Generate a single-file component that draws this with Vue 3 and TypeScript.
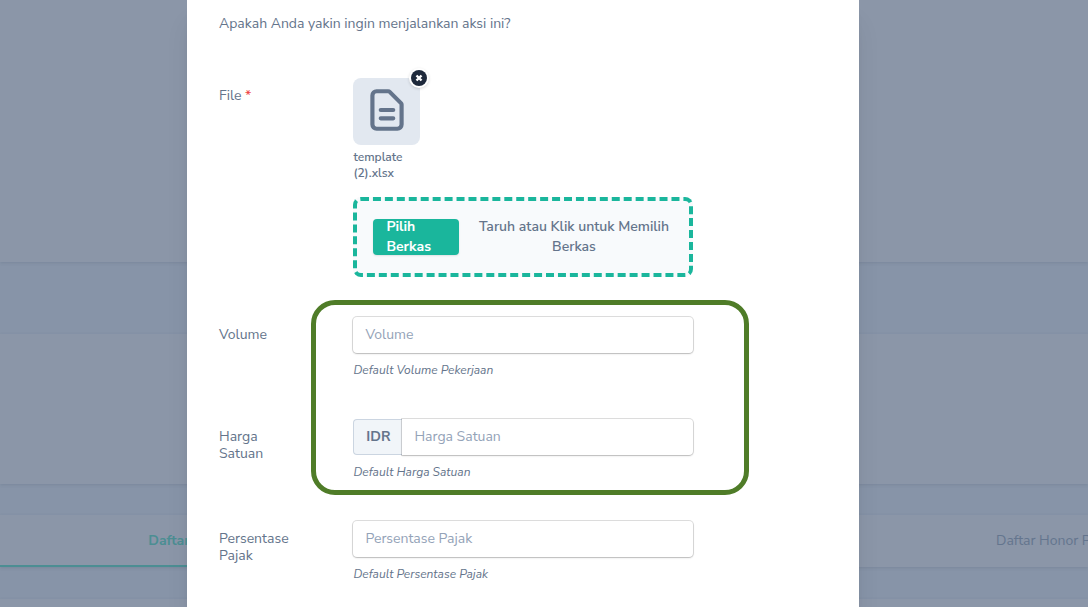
<script setup lang="ts">
import { ref } from 'vue'

interface Field {
  id: string
  label: string
  help: string
  prefix?: string
}

const highlighted: Field[] = [
  { id: 'volume', label: 'Volume', help: 'Default Volume Pekerjaan' },
  { id: 'harga', label: 'Harga Satuan', help: 'Default Harga Satuan', prefix: 'IDR' },
]
const others: Field[] = [
  { id: 'pajak', label: 'Persentase Pajak', help: 'Default Persentase Pajak' },
]
const groups = [
  { name: 'main', marked: true, fields: highlighted },
  { name: 'tax', marked: false, fields: others },
]
const values = ref<Record<string, string>>({ volume: '', harga: '', pajak: '' })
const fileName = ref('template (2).xlsx')
</script>

<template>
  <div class="screen">
    <div class="backdrop">
      <div class="card summary"></div>
      <div class="card details"></div>
      <nav class="card tabs">
        <a href="#" class="tab active">Daftar</a>
        <a href="#" class="tab">Daftar Honor P</a>
      </nav>
      <div class="card listing"></div>
    </div>

    <div class="stage">
      <form class="modal" role="dialog" @submit.prevent>
        <p class="question">Apakah Anda yakin ingin menjalankan aksi ini?</p>

        <div class="row">
          <label class="label" for="file">File <span class="required">*</span></label>
          <div class="control">
            <div class="files">
              <div class="file">
                <div class="tile">
                  <svg class="doc" viewBox="0 0 24 24" fill="none" stroke="currentColor" stroke-width="2" stroke-linecap="round" stroke-linejoin="round">
                    <path d="M9 12h6m-6 4h6m2 5H7a2 2 0 01-2-2V5a2 2 0 012-2h5.586a1 1 0 01.707.293l5.414 5.414a1 1 0 01.293.707V19a2 2 0 01-2 2z" />
                  </svg>
                  <button type="button" class="remove" aria-label="Hapus">
                    <svg viewBox="0 0 16 16"><circle cx="8" cy="8" r="8" fill="#1e293b" /><path d="M5.5 5.5l5 5M10.5 5.5l-5 5" stroke="#fff" stroke-width="2.4" /></svg>
                  </button>
                </div>
                <p class="filename">{{ fileName }}</p>
              </div>
            </div>
            <div class="dropzone">
              <button id="file" type="button" class="choose">Pilih Berkas</button>
              <p class="hint">Taruh atau Klik untuk Memilih Berkas</p>
            </div>
          </div>
        </div>

        <div v-for="group in groups" :key="group.name" class="group" :class="{ marked: group.marked }">
          <div v-for="field in group.fields" :key="field.id" class="row">
            <label class="label" :for="field.id">{{ field.label }}</label>
            <div class="control">
              <div class="inputs">
                <span v-if="field.prefix" class="prefix">{{ field.prefix }}</span>
                <input :id="field.id" v-model="values[field.id]" class="input" :class="{ joined: field.prefix }" type="text" :placeholder="field.label" />
              </div>
              <p class="help">{{ field.help }}</p>
            </div>
          </div>
        </div>
      </form>
    </div>
  </div>
</template>

<style>
body {
  margin: 0;
  overflow: hidden;
}
</style>

<style scoped>
.screen {
  position: relative;
  height: 100vh;
  overflow: hidden;
  background: #8794a8;
  color: #64748b;
  font-family: "Nunito Sans", Nunito, Lato, "Open Sans", sans-serif;
  font-size: 14px;
}
.screen * {
  box-sizing: border-box;
}
p {
  margin: 0;
}
.backdrop {
  position: absolute;
  inset: 0;
  overflow: hidden;
}
.card {
  background: #8b96a8;
  box-shadow: 0 1px 3px rgba(60, 75, 100, 0.18);
}
.summary {
  height: 262px;
}
.details {
  height: 150px;
  margin-top: 72px;
}
.tabs {
  display: flex;
  height: 52px;
  margin-top: 31px;
}
.listing {
  height: 100px;
  margin-top: 32px;
}
.tab {
  flex: 0 0 338px;
  line-height: 52px;
  color: #64758e;
  text-align: center;
  text-decoration: none;
}
.tab + .tab {
  flex: 1 0 auto;
  padding-left: 658px;
  text-align: left;
  white-space: nowrap;
}
.tab.active {
  border-bottom: 2px solid #4c8e93;
  color: #4c8e93;
  font-weight: 700;
}
.stage {
  position: relative;
  min-height: 100%;
  display: flex;
  justify-content: center;
  padding-right: 42px;
}
.modal {
  width: 100%;
  max-width: 672px;
  padding-top: 13px;
  background: #fff;
  box-shadow: 0 20px 25px -5px rgba(0, 0, 0, 0.1), 0 8px 10px -6px rgba(0, 0, 0, 0.1);
}
.question {
  padding: 0 32px;
  margin-bottom: 24px;
  line-height: 21px;
}
.row {
  display: flex;
  padding: 20px 0;
}
.label {
  width: 20%;
  padding: 9px 32px 0;
  line-height: 17px;
}
.required {
  color: #ef4444;
}
.control {
  width: 60%;
  padding: 0 32px;
}
.files {
  display: grid;
  grid-template-columns: repeat(4, 1fr);
  gap: 24px;
  margin-bottom: 16px;
}
.tile {
  position: relative;
  display: flex;
  align-items: center;
  justify-content: center;
  aspect-ratio: 1;
  padding-bottom: 2px;
  border-radius: 8px;
  background: #e2e8f0;
}
.doc {
  width: 50px;
  height: 50px;
}
.remove {
  position: absolute;
  top: -10px;
  right: -9px;
  width: 20px;
  height: 20px;
  padding: 2px;
  border: 0;
  border-radius: 50%;
  background: #fff;
  box-shadow: 0 1px 3px rgba(0, 0, 0, 0.15);
}
.remove svg {
  display: block;
}
.filename {
  margin-top: 4px;
  font-size: 12px;
  font-weight: 600;
  line-height: 16px;
}
.dropzone {
  display: flex;
  align-items: center;
  gap: 16px;
  height: 80px;
  padding: 0 16px;
  border: 4px dashed #1ab69c;
  border-radius: 8px;
  background: #f8fafc;
}
.choose {
  display: flex;
  align-items: center;
  flex: 0 0 86px;
  height: 36px;
  padding: 0 13px;
  border: 0;
  border-radius: 4px;
  background: #1ab69c;
  box-shadow: 0 1px 2px rgba(0, 0, 0, 0.1);
  color: #fff;
  font-family: inherit;
  font-size: 14px;
  font-weight: 700;
  line-height: 20px;
  text-align: left;
}
.hint {
  flex: 1;
  font-weight: 600;
  line-height: 20px;
  text-align: center;
}
.group {
  position: relative;
}
.marked::after {
  content: "";
  position: absolute;
  inset: 3px 110px 6px 124px;
  border: 5px solid #4f7c28;
  border-radius: 24px;
  pointer-events: none;
}
.inputs {
  display: flex;
  height: 36px;
}
.prefix {
  display: flex;
  align-items: center;
  flex: 0 0 49px;
  justify-content: center;
  border: 1px solid #cbd5e1;
  border-right: 0;
  border-radius: 4px 0 0 4px;
  background: #f1f5f9;
  font-weight: 700;
}
.input {
  flex: 1;
  min-width: 0;
  padding: 0 12px;
  border: 0;
  border-radius: 4px;
  background: #fff;
  box-shadow: 0 0 0 1px rgba(0, 0, 0, 0.13), 0 1px 2px rgba(0, 0, 0, 0.16);
  color: #64748b;
  font-family: inherit;
  font-size: 14px;
}
.joined {
  border-radius: 0 4px 4px 0;
}
.input::placeholder {
  color: #94a3b8;
  opacity: 1;
}
.help {
  margin-top: 8px;
  font-size: 12px;
  font-style: italic;
  line-height: 18px;
}
</style>
